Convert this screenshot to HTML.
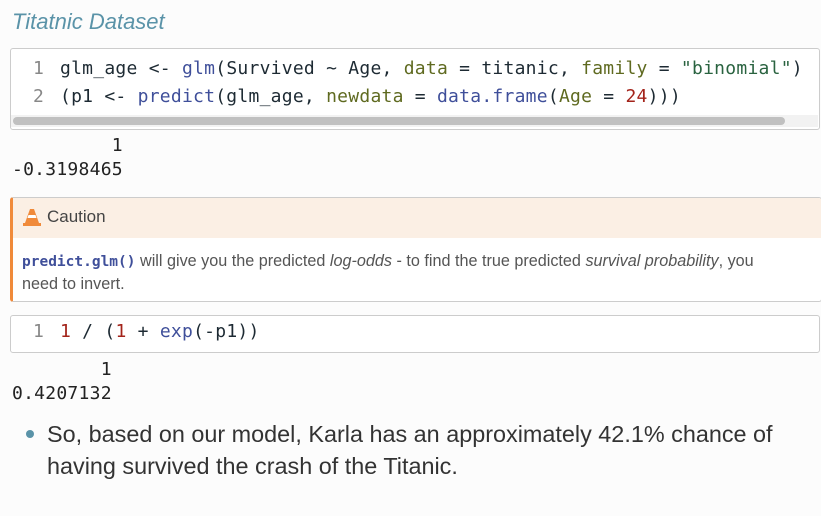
<!DOCTYPE html>
<html><head><meta charset="utf-8"><style>
body{margin:0;width:821px;height:516px;background:#fcfcfc;position:relative;overflow:hidden;font-family:"Liberation Sans",sans-serif}
.a{position:absolute}
.mono{font-family:"DejaVu Sans Mono","Liberation Mono",monospace;font-size:18px;white-space:pre;color:#1d2a33;letter-spacing:0.25px}
.ln{color:#888;display:inline-block;width:27px}
.fn{color:#3f4f9a}.ar{color:#5f6a20}.st{color:#2a6340}.nu{color:#a3231a}
</style></head><body>
<div class="a" style="left:12px;top:9px;font-size:22px;font-style:italic;color:#5a93a8;">Titatnic Dataset</div>
<div class="a" style="left:10px;top:48px;width:808px;height:80px;border:1px solid #ccc;border-radius:3px;background:#fff"></div>
<div class="a mono" style="left:33px;top:55px;line-height:28px"><span class="ln">1</span>glm_age &lt;- <span class="fn">glm</span>(Survived ~ Age, <span class="ar">data</span> = titanic, <span class="ar">family</span> = <span class="st">"binomial"</span>)
<span class="ln">2</span>(p1 &lt;- <span class="fn">predict</span>(glm_age, <span class="ar">newdata</span> = <span class="fn">data.frame</span>(<span class="ar">Age</span> = <span class="nu">24</span>)))</div>
<div class="a" style="left:11px;top:115px;width:807px;height:12px;background:#f2f2f2"></div>
<div class="a" style="left:13px;top:117px;width:772px;height:8px;border-radius:4px;background:#c0c0c0"></div>
<div class="a mono" style="left:12px;top:134px;line-height:24px;color:#222">         1
-0.3198465</div>
<div class="a" style="left:10px;top:197px;width:808px;height:103px;border:1px solid #ccc;border-left:3px solid #f08a3a;border-radius:3px;background:#fff;overflow:hidden">
<div style="height:40px;background:#fbefe4"></div></div>
<svg class="a" style="left:22px;top:207px" width="20" height="20" viewBox="0 0 20 20"><path d="M8 2h4l5 14H3z" fill="#f08a3a"/><path d="M6.5 8h7l1 3h-9z" fill="#fff"/><rect x="1" y="16" width="18" height="3" fill="#f08a3a"/></svg>
<div class="a" style="left:47px;top:207px;font-size:17px;color:#444">Caution</div>
<div class="a" style="left:22px;top:250px;width:765px;font-size:16.2px;line-height:22px;color:#555;font-weight:300"><span style="font-family:'DejaVu Sans Mono',monospace;color:#3f4f9a;font-weight:bold;font-size:14.5px">predict.glm()</span> will give you the predicted <i>log-odds</i> - to find the true predicted <i>survival probability</i>, you need to invert.</div>
<div class="a" style="left:10px;top:315px;width:808px;height:36px;border:1px solid #ccc;border-radius:3px;background:#fff"></div>
<div class="a mono" style="left:33px;top:321px"><span class="ln">1</span><span class="nu">1</span> / (<span class="nu">1</span> + <span class="fn">exp</span>(-p1))</div>
<div class="a mono" style="left:12px;top:358px;line-height:24px;color:#222">        1
0.4207132</div>
<div class="a" style="left:26px;top:430px;width:8px;height:8px;border-radius:50%;background:#5a93a8"></div>
<div class="a" style="left:47px;top:418px;width:770px;font-size:23.4px;line-height:32px;color:#333">So, based on our model, Karla has an approximately 42.1% chance of having survived the crash of the Titanic.</div>
</body></html>
